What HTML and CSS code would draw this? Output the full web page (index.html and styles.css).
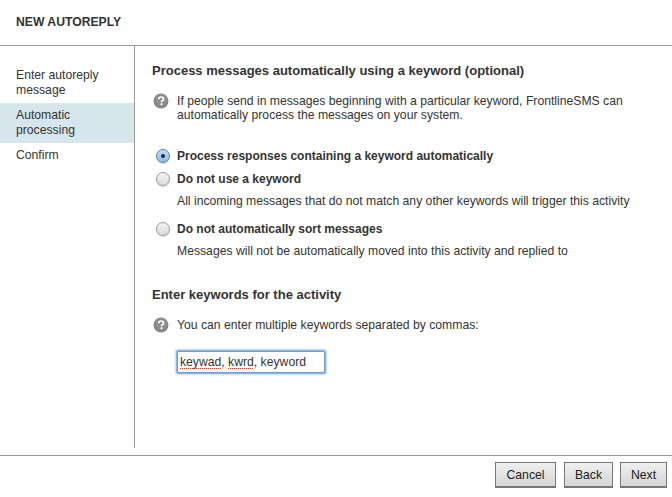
FILE: index.html
```html
<!DOCTYPE html>
<html lang="en">
<head>
    <meta charset="UTF-8">
    <title>New Autoreply</title>
    <link rel="stylesheet" href="styles.css">
</head>
<body>
<div class="dialog">
    <div class="title">NEW AUTOREPLY</div>
    <div class="main">
        <ul class="steps">
            <li>Enter autoreply message</li>
            <li class="current">Automatic processing</li>
            <li>Confirm</li>
        </ul>
        <div class="content">
            <h2>Process messages automatically using a keyword (optional)</h2>
            <div class="help help-first">
                <svg class="help-icon" viewBox="0 0 16 16"><circle cx="8" cy="8" r="7.5" fill="#858585"/><circle cx="8" cy="7" r="6" fill="#8f8f8f"/><path d="M5.6 6.2C5.7 4.7 6.7 4 8.1 4c1.4 0 2.4.8 2.4 2 0 1.6-2 1.7-2 3.2" fill="none" stroke="#fff" stroke-width="1.7"/><rect x="7.5" y="10.4" width="1.9" height="1.8" fill="#fff"/></svg>
                <p>If people send in messages beginning with a particular keyword, FrontlineSMS can automatically process the messages on your system.</p>
            </div>
            <div class="options">
                <div class="option option-first">
                    <span class="radio checked"></span>
                    <label>Process responses containing a keyword automatically</label>
                </div>
                <div class="option option-second">
                    <span class="radio"></span>
                    <label>Do not use a keyword</label>
                </div>
                <p class="note">All incoming messages that do not match any other keywords will trigger this activity</p>
                <div class="option option-third">
                    <span class="radio"></span>
                    <label>Do not automatically sort messages</label>
                </div>
                <p class="note">Messages will not be automatically moved into this activity and replied to</p>
            </div>
            <h2 class="keywords-title">Enter keywords for the activity</h2>
            <div class="help help-second">
                <svg class="help-icon" viewBox="0 0 16 16"><circle cx="8" cy="8" r="7.5" fill="#858585"/><circle cx="8" cy="7" r="6" fill="#8f8f8f"/><path d="M5.6 6.2C5.7 4.7 6.7 4 8.1 4c1.4 0 2.4.8 2.4 2 0 1.6-2 1.7-2 3.2" fill="none" stroke="#fff" stroke-width="1.7"/><rect x="7.5" y="10.4" width="1.9" height="1.8" fill="#fff"/></svg>
                <p>You can enter multiple keywords separated by commas:</p>
            </div>
            <div class="keywords-input"><span class="typo">keywad</span>, <span class="typo">kwrd</span>, keyword</div>
        </div>
    </div>
    <div class="buttons">
        <button class="cancel">Cancel</button>
        <button class="back">Back</button>
        <button class="next">Next</button>
    </div>
</div>
</body>
</html>
```

FILE: styles.css
```css
body {
    margin: 0;
    background: #fff;
    font-family: "Liberation Sans", Arial, sans-serif;
    font-size: 12.2px;
    color: #333;
}

p, h2, ul {
    margin: 0;
    padding: 0;
}

.dialog {
    width: 672px;
    height: 497px;
    overflow: hidden;
}

.title {
    height: 46px;
    box-sizing: border-box;
    padding: 15px 16px 0;
    font-size: 12.2px;
    line-height: 14px;
    font-weight: bold;
    border-bottom: 1px solid #999;
}

.main {
    display: flex;
    height: 402px;
}

.steps {
    flex: none;
    box-sizing: border-box;
    width: 135px;
    padding-top: 22px;
    list-style: none;
    border-right: 1px solid #999;
    line-height: 15px;
}

.steps li {
    padding: 0 16px 5px;
}

.steps li.current {
    background: #d7e6ed;
    padding: 5px 16px;
    margin-bottom: 5px;
}

.content {
    flex: 1;
    padding: 17px 0 0 17px;
}

h2 {
    font-size: 13px;
    line-height: 16px;
    font-weight: bold;
}

.help {
    display: flex;
    line-height: 14px;
}

.help-first {
    margin-top: 14px;
}

.help-second {
    margin-top: 14px;
}

.help-icon {
    width: 16px;
    height: 16px;
    flex: none;
    margin: 0 8px 0 1px;
}

.help p {
    width: 465px;
    padding-top: 1px;
}

.options {
    margin-left: 4px;
    margin-top: 26px;
}

.option {
    display: flex;
    align-items: center;
    height: 16px;
}

.option label {
    font-size: 12px;
    font-weight: bold;
    margin-left: 7px;
}

.option-second {
    margin-top: 7px;
}

.option-third {
    margin-top: 12px;
}

.radio {
    box-sizing: border-box;
    width: 14px;
    height: 14px;
    border: 1px solid #9a9a9a;
    border-radius: 50%;
    background: linear-gradient(#f4f4f4, #dcdcdc);
    box-shadow: 0 1px 1px rgba(0, 0, 0, .15);
    display: flex;
    align-items: center;
    justify-content: center;
}

.radio.checked {
    border-color: #5b7fa8;
    background: linear-gradient(#c3dcf5, #8fbbe8);
}

.radio.checked::after {
    content: "";
    width: 4px;
    height: 4px;
    border-radius: 50%;
    background: #1c2a3a;
}

.note {
    margin: 6px 0 0 21px;
    line-height: 16px;
}

.keywords-title {
    margin-top: 28px;
}

.keywords-input {
    width: 144px;
    height: 20px;
    line-height: 20px;
    margin: 18px 0 0 25px;
    padding: 0 0 0 2px;
    border: 1px solid #6f9fd4;
    border-radius: 1px;
    box-shadow: 0 0 0 1px #8cb5e2, 0 0 2px 2px #c4daf0;
}

.typo {
    background: linear-gradient(90deg, #e03020 50%, transparent 50%) left bottom / 2px 1px repeat-x;
}

.buttons {
    border-top: 1px solid #999;
    margin-top: 7px;
    display: flex;
    justify-content: flex-end;
    gap: 7px;
    padding: 6px 5px 0 0;
}

button {
    height: 26px;
    padding: 0;
    font-family: "Liberation Sans", Arial, sans-serif;
    font-size: 12.2px;
    color: #222;
    background: linear-gradient(#efefef, #d6d6d6);
    border: 1px solid #777;
    border-bottom-width: 2px;
}

.cancel {
    width: 61px;
    margin-right: 1px;
}

.back {
    width: 49px;
}

.next {
    width: 47px;
}
```
